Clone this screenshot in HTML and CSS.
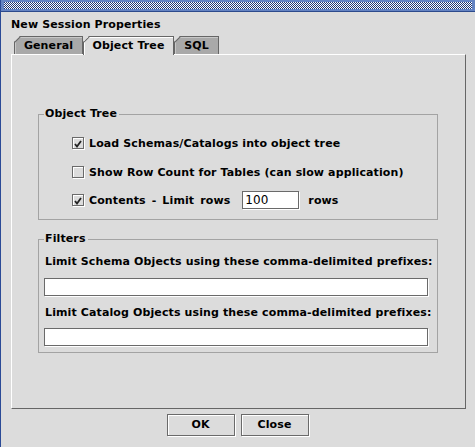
FILE: index.html
```html
<!DOCTYPE html>
<html>
<head>
<meta charset="utf-8">
<link rel="stylesheet" href="styles.css">
</head>
<body>
<div class="window">
  <div class="titlebar"><div class="bumps"></div></div>
  <div class="content">
    <div class="dialog-title">New Session Properties</div>
    <div class="tabs">
      <div class="tab tab-general">General</div>
      <div class="tab tab-objtree active">Object Tree</div>
      <div class="tab tab-sql">SQL</div>
    </div>
    <div class="panel">
      <div class="group group-tree">
        <div class="group-title">Object Tree</div>
        <div class="row row1">
          <span class="checkbox"><svg width="8" height="8" viewBox="0 0 8 8"><path d="M1 4 L3 6.5 L7 1" fill="none" stroke="#222" stroke-width="1.8"/></svg></span>
          <span class="label">Load Schemas/Catalogs into object tree</span>
        </div>
        <div class="row row2">
          <span class="checkbox"></span>
          <span class="label">Show Row Count for Tables (can slow application)</span>
        </div>
        <div class="row row3">
          <span class="checkbox"><svg width="8" height="8" viewBox="0 0 8 8"><path d="M1 4 L3 6.5 L7 1" fill="none" stroke="#222" stroke-width="1.8"/></svg></span>
          <span class="label spaced">Contents - Limit rows</span>
          <span class="field small">100</span>
          <span class="label rows">rows</span>
        </div>
      </div>
      <div class="group group-filters">
        <div class="group-title">Filters</div>
        <div class="flabel first">Limit Schema Objects using these comma-delimited prefixes:</div>
        <div class="field wide"></div>
        <div class="flabel second">Limit Catalog Objects using these comma-delimited prefixes:</div>
        <div class="field wide last"></div>
      </div>
    </div>
    <div class="buttons">
      <div class="button">OK</div>
      <div class="button">Close</div>
    </div>
  </div>
</div>
</body>
</html>
```

FILE: styles.css
```css
html, body {
  margin: 0;
  padding: 0;
  background: #dcdcdc;
}
body {
  font-family: "DejaVu Sans", "Liberation Sans", sans-serif;
  font-weight: bold;
  font-size: 11px;
  letter-spacing: 0.12px;
  color: #000;
}
.window {
  width: 474px;
  height: 447px;
  border-left: 1px solid #2a4a96;
  background: #dcdcdc;
  display: flex;
  flex-direction: column;
}
.titlebar {
  height: 11px;
  background: #6483c2;
  border-bottom: 1px solid #2c4a8c;
  display: flex;
  align-items: center;
}
.bumps {
  flex: 1;
  height: 7px;
  margin: 0 3px 0 3px;
  background-image: conic-gradient(#ffffff 25%, #1f3673 0 50%, #ffffff 0 75%, #1f3673 0);
  background-size: 2px 2px;
}
.content {
  display: flex;
  flex-direction: column;
}
.dialog-title {
  height: 24px;
  line-height: 24px;
  padding-left: 10px;
  box-sizing: border-box;
  padding-top: 1px;
}
.tabs {
  display: flex;
  height: 18px;
  padding-left: 13px;
  position: relative;
  z-index: 1;
}
.tab {
  position: relative;
  height: 18px;
  box-sizing: border-box;
  background: #a9a9a9;
  border: 1px solid #666;
  border-bottom: none;
  text-align: center;
  line-height: 17px;
  clip-path: polygon(6px 0, 100% 0, 100% 100%, 0 100%, 0 6px);
  box-shadow: inset 1px 1px 0 #c8c8c8;
}
.tab::before {
  content: "";
  position: absolute;
  left: -2px;
  top: 2px;
  width: 9px;
  height: 1px;
  background: #666;
  transform: rotate(-45deg);
}
.tab-general { width: 69px; }
.tab-objtree { width: 91px; }
.tab-sql { width: 45px; }
.tab.active {
  background: #dcdcdc;
  height: 19px;
  margin-bottom: -1px;
  border-color: #666;
  box-shadow: inset 1px 1px 0 #ffffff;
}
.panel {
  margin-left: 10px;
  width: 455px;
  height: 355px;
  box-sizing: border-box;
  border-top: 1px solid #ffffff;
  border-left: 1px solid #ffffff;
  border-right: 1px solid #666;
  border-bottom: 1px solid #666;
  display: flex;
  flex-direction: column;
}
.group {
  margin-left: 26px;
  width: 400px;
  box-sizing: border-box;
  border: 1px solid #a3a3a3;
  display: flex;
  flex-direction: column;
}
.group-tree {
  margin-top: 59px;
  height: 106px;
}
.group-filters {
  margin-top: 19px;
  height: 114px;
}
.group-title {
  margin: -8px 0 0 5px;
  padding: 0 2px 0 1px;
  line-height: 14px;
  height: 14px;
  background: #dcdcdc;
  align-self: flex-start;
}
.row {
  display: flex;
  align-items: center;
  height: 20px;
  padding-left: 33px;
}
.row1 { margin-top: 12px; }
.row2 { margin-top: 9px; }
.row3 { margin-top: 8px; }
.checkbox {
  width: 12px;
  height: 12px;
  border: 1px solid #6a6a6a;
  box-sizing: border-box;
  box-shadow: 1px 1px 0 #ffffff, inset 1px 1px 0 #ffffff;
  background: #dcdcdc;
  margin-right: 5px;
  display: flex;
  align-items: center;
  justify-content: center;
}
.checkbox svg { display: block; margin: 1px 0 0 0; }
.spaced { word-spacing: 2px; }
.field {
  background: #fff;
  border: 1px solid #6a6a6a;
  box-sizing: border-box;
  box-shadow: 1px 1px 0 #ffffff;
  font-weight: normal;
  font-size: 12px;
  letter-spacing: 0;
}
.field.small {
  width: 57px;
  height: 18px;
  line-height: 16px;
  padding-left: 2px;
  margin-left: 12px;
}
.rows { margin-left: 9px; }
.flabel {
  padding-left: 6px;
  height: 16px;
  line-height: 16px;
}
.flabel.first { margin-top: 8px; }
.flabel.second { margin-top: 9px; }
.field.wide {
  margin-left: 5px;
  margin-top: 8px;
  width: 384px;
  height: 18px;
}
.field.wide.last { margin-top: 7px; }
.buttons {
  display: flex;
  justify-content: center;
  gap: 6px;
  margin-top: 5px;
  padding-right: 1px;
}
.button {
  width: 68px;
  height: 22px;
  box-sizing: border-box;
  border: 1px solid #6a6a6a;
  box-shadow: 1px 1px 0 #ffffff, inset 1px 1px 0 #ffffff;
  text-align: center;
  line-height: 20px;
}
```
